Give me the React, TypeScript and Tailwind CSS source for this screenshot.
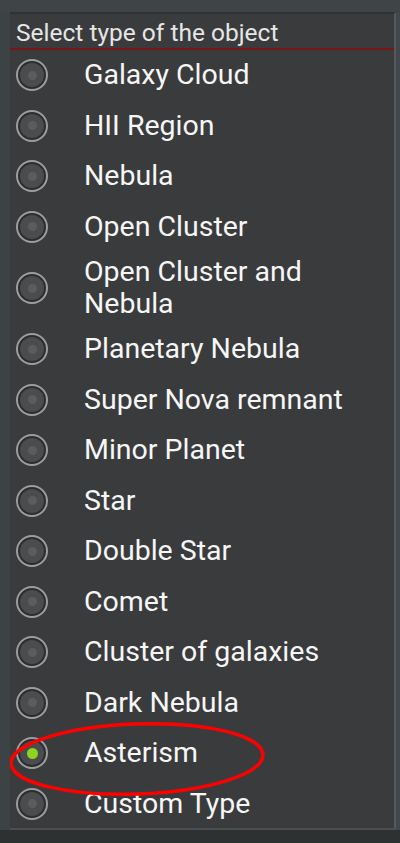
import React from "react";

const items = [
  "Galaxy Cloud",
  "HII Region",
  "Nebula",
  "Open Cluster",
  "Open Cluster and Nebula",
  "Planetary Nebula",
  "Super Nova remnant",
  "Minor Planet",
  "Star",
  "Double Star",
  "Comet",
  "Cluster of galaxies",
  "Dark Nebula",
  "Asterism",
  "Custom Type",
];

function Radio({ checked }: { checked: boolean }) {
  return (
    <div className="relative w-[32px] h-[32px] shrink-0 rounded-full border-2 border-[#9c9e9e] bg-[#2c2d2e] flex items-center justify-center">
      <div className="w-[24px] h-[24px] rounded-full bg-[#4a4c4d] flex items-center justify-center">
        {checked ? (
          <div className="w-[11px] h-[11px] rounded-full bg-[#8fd321]" />
        ) : (
          <div className="w-[9px] h-[9px] rounded-full bg-[#5a5c5d]" />
        )}
      </div>
    </div>
  );
}

export default function App() {
  return (
    <div className="w-[400px] h-[843px] bg-[#41474a] overflow-hidden flex flex-col font-['Roboto',sans-serif] font-normal">
      <div className="h-[12px] bg-[#3f4546]" />
      <div className="flex">
        <div className="w-[10px] bg-[#3d4344]" />
        <div className="relative w-[386px] h-[818px] bg-[#3a3b3c] border-t-2 border-r-2 border-b-2 border-[#2f3233] border-r-[#55595a] border-b-[#4b4f50] overflow-hidden">
          <div className="h-[36px] flex items-center pt-[4px] pl-[6px] text-[24.5px] text-[#e6e6e6] leading-none border-b-2 border-[#7a1416]">
            Select type of the object
          </div>
          {items.map((label) => (
            <div
              key={label}
              className={`flex items-center pl-[6px] ${
                label === "Open Cluster and Nebula" ? "h-[72px]" : "h-[50.5px]"
              }`}
            >
              <Radio checked={label === "Asterism"} />
              <span className="ml-[36px] w-[290px] text-[28.5px] leading-[32px] text-[#f6f6f6]">
                {label}
              </span>
            </div>
          ))}
          <svg
            className="absolute left-[-4px] top-[705px] pointer-events-none"
            width="262"
            height="80"
            viewBox="0 0 262 80"
          >
            <ellipse
              cx="131"
              cy="40"
              rx="126"
              ry="35"
              fill="none"
              stroke="#ff0000"
              strokeWidth="3.5"
              transform="rotate(-2 131 40)"
            />
          </svg>
        </div>
      </div>
      <div className="flex-1 bg-[#2e3132]" />
    </div>
  );
}
